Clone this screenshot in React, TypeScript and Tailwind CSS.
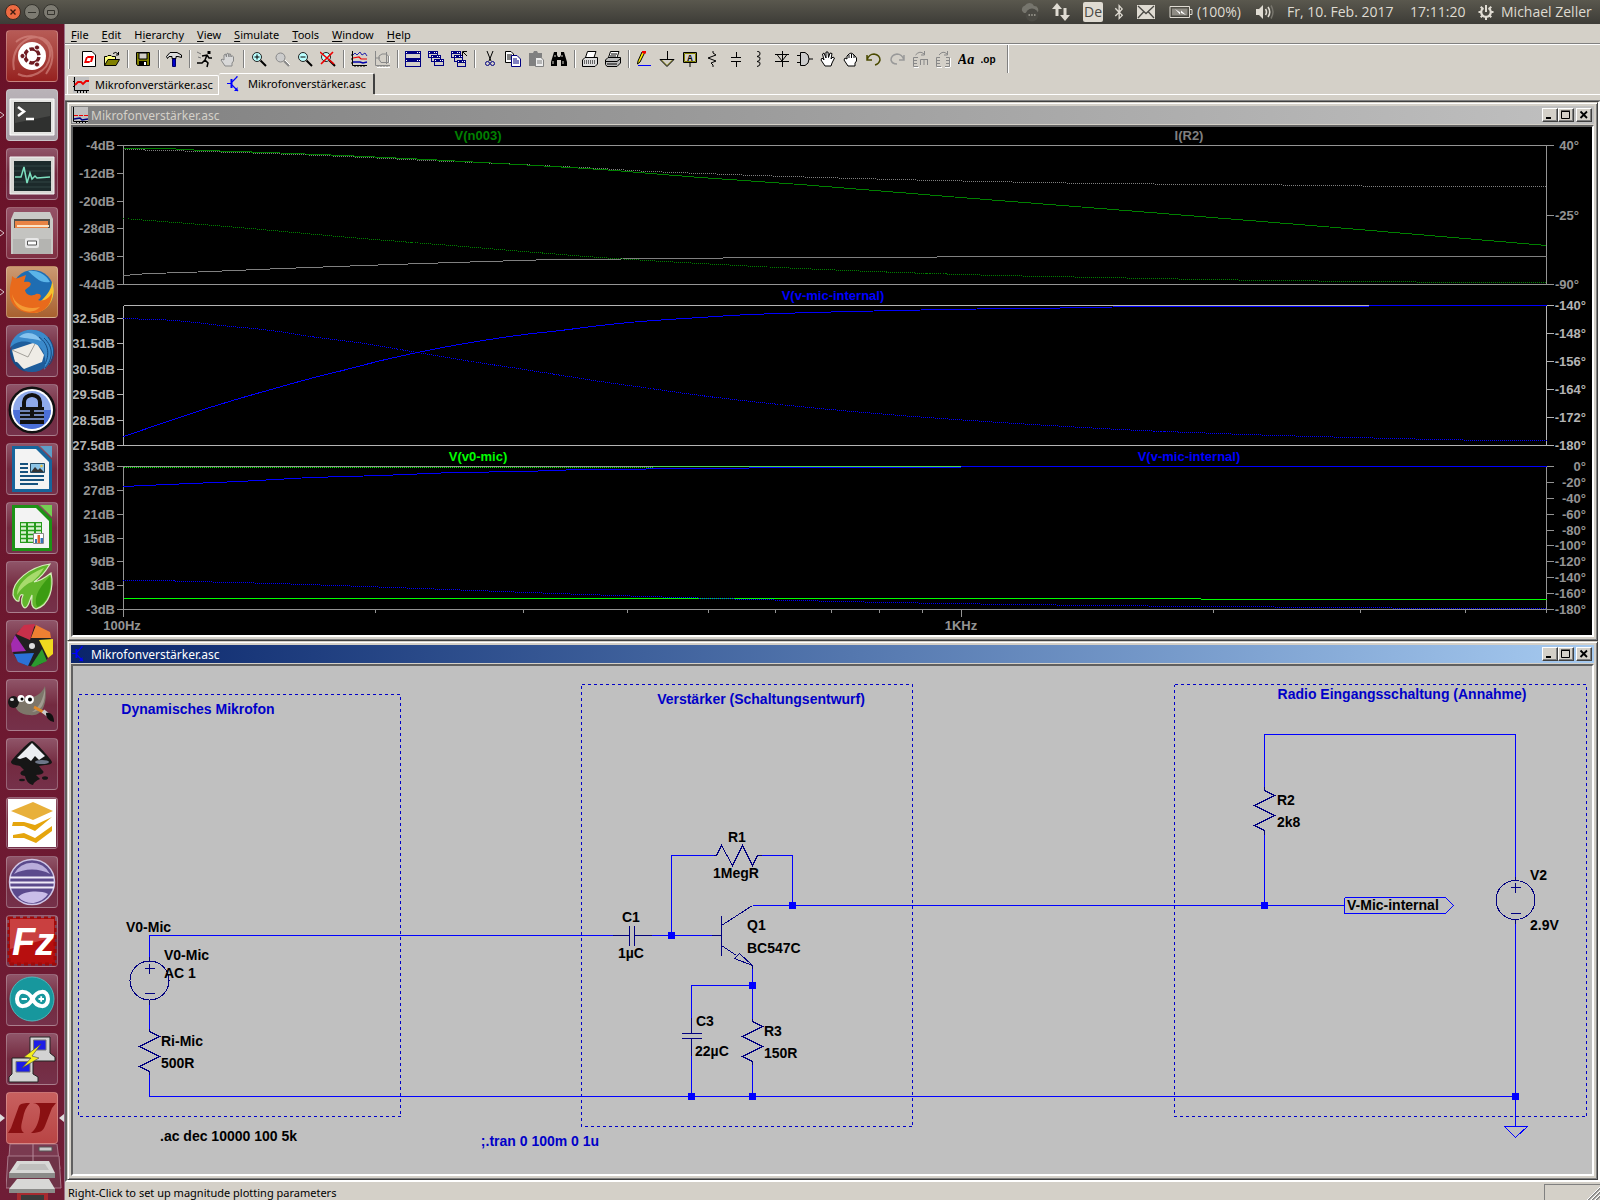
import type { ReactNode } from "react";
import { FaBluetoothB } from "react-icons/fa";

type Point = [number, number];

const path = (points: Point[]) =>
  points.map(([x, y], i) => `${i ? "L" : "M"}${x + 0.5} ${y + 0.5}`).join("");

// Catmull-Rom spline through the sampled points
const spline = (points: Point[]) => {
  let d = path(points.slice(0, 1));
  for (let i = 0; i < points.length - 1; i++) {
    const p0 = points[Math.max(i - 1, 0)];
    const [p1, p2] = [points[i], points[i + 1]];
    const p3 = points[Math.min(i + 2, points.length - 1)];
    const third = (p2[0] - p1[0]) / 3;
    const slope1 = (p2[1] - p0[1]) / (p2[0] - p0[0]);
    const slope2 = (p3[1] - p1[1]) / (p3[0] - p1[0]);
    d += `C${p1[0] + third + 0.5} ${p1[1] + slope1 * third + 0.5} ${p2[0] - third + 0.5} ${p2[1] - slope2 * third + 0.5} ${p2[0] + 0.5} ${p2[1] + 0.5}`;
  }
  return d;
};

/* ---------- top panel ---------- */

function WindowDots() {
  return (
    <div className="flex items-center gap-[3px]">
      <button
        aria-label="Close"
        className="flex h-4 w-4 items-center justify-center rounded-full border border-[#3a2a22] bg-[#ee6b42]"
      >
        <svg viewBox="0 0 8 8" className="h-2 w-2" stroke="#3c1a10" strokeWidth="1.4">
          <path d="M1.5 1.5L6.5 6.5M6.5 1.5L1.5 6.5" />
        </svg>
      </button>
      <button
        aria-label="Minimize"
        className="flex h-4 w-4 items-center justify-center rounded-full border border-[#35342e] bg-[#7d7b72]"
      >
        <svg viewBox="0 0 8 8" className="h-2 w-2" stroke="#35342e">
          <path d="M0 4.5H8" />
        </svg>
      </button>
      <button
        aria-label="Maximize"
        className="flex h-4 w-4 items-center justify-center rounded-full border border-[#35342e] bg-[#7d7b72]"
      >
        <svg viewBox="0 0 8 8" className="h-2 w-2" fill="none" stroke="#35342e">
          <path d="M0.5 2.5H7.5V6.5H0.5z" />
        </svg>
      </button>
    </div>
  );
}

function TopPanel() {
  return (
    <header className="flex h-6 items-center justify-between bg-linear-to-b from-[#5a584e] to-[#3d3c37] pr-[6px] pl-[5px] font-['Open_Sans','Noto_Sans',sans-serif] text-[14px] leading-6 text-[#dfdbd2]">
      <WindowDots />
      <div className="flex items-center">
        <svg viewBox="0 0 20 20" className="mr-3 h-5 w-5">
          <path d="M4 11a4 4 0 0 1 1-7.5A5 5 0 0 1 14 4a4 4 0 0 1 3 7z" fill="#76756d" />
          <circle cx="12" cy="13" r="6.5" fill="#4b4a44" />
          <path d="M8.500 13h1.500M11.200 13h1.500M14 13h1.500" stroke="#8f8d84" strokeWidth="2" />
        </svg>
        <svg viewBox="0 0 18 18" className="mr-[13px] h-[18px] w-[18px]" fill="#dfdbd2">
          <path d="M0 6L5 0L10 6H6.500V13H3.500V6zM8 12H11.500V5H14.500V12H18L13 18z" />
        </svg>
        <span className="mr-[11px] flex h-5 w-[20px] items-center justify-center rounded-xs bg-[#dfdbd2] text-[#4a4944]">
          De
        </span>
        <FaBluetoothB className="mr-[13px] h-4 w-[10px]" />
        <svg viewBox="0 0 18 14" className="mr-[14px] h-[14px] w-[18px]">
          <path d="M0 0H18V14H0z" fill="#dfdbd2" />
          <path d="M1 1L9 8.500L17 1M1 13L6.500 7M17 13L11.500 7" fill="none" stroke="#4a4944" strokeWidth="1.300" />
        </svg>
        <svg viewBox="0 0 24 12" className="mr-1 h-3 w-6">
          <path d="M1 .5H20.500V11.500H1zM21 3.500h2v5h-2" fill="none" stroke="#dfdbd2" />
          <path d="M3 2.500H18.500V9.500H3z" fill="#8f8c84" />
          <path d="M6 3L12 7V4.500L17 9L11 6.500V8.500z" fill="#fff" />
        </svg>
        <span className="mr-3 w-[46px] whitespace-nowrap">(100%)</span>
        <svg viewBox="0 0 20 16" className="mr-3 h-4 w-5">
          <path d="M1 5H4L8 1V15L4 11H1z" fill="#dfdbd2" />
          <path d="M10.500 5Q12.500 8 10.500 11M13 3Q16.500 8 13 13" fill="none" stroke="#dfdbd2" strokeWidth="1.600" />
          <path d="M16 1.500Q20 8 16 14.500" fill="none" stroke="#77756d" strokeWidth="1.500" />
        </svg>
        <span className="mr-4 w-[107px] whitespace-nowrap">Fr, 10. Feb. 2017</span>
        <span className="mr-3 w-[56px] whitespace-nowrap">17:11:20</span>
        <svg viewBox="0 0 16 16" className="mr-[7px] h-4 w-4" fill="none" stroke="#dfdbd2">
          <path d="M5.500 4A4.800 4.800 0 1 0 10.500 4" strokeWidth="2.200" />
          <path
            d="M8 1V8M.5 8H3M13 8h2.500M2.700 13.300L4.500 11.500M13.300 13.300L11.500 11.500M2.700 2.700L4.300 4.300M13.300 2.700L11.700 4.300M8 13v3"
            strokeWidth="2"
          />
        </svg>
        <span className="w-[93px] whitespace-nowrap">Michael Zeller</span>
      </div>
    </header>
  );
}

/* ---------- launcher ---------- */

interface LauncherItem {
  name: string;
  tile: string;
  running?: boolean;
  active?: boolean;
  art: ReactNode;
}

const plain = "bg-linear-to-b from-[#8f5468] via-[#732a40] to-[#75314a]";

const launcherItems: LauncherItem[] = [
  {
    name: "Dash",
    tile: "bg-linear-to-b from-[#b75b56] to-[#96201f]",
    art: (
      <>
        <path d="M8 40C4 18 20 4 36 8C48 12 50 30 40 44M10 12C24 0 46 8 44 26C42 42 24 50 12 44" fill="none" stroke="#d98f88" strokeWidth="2" opacity=".6" />
        <circle cx="26" cy="26" r="14" fill="#fff" />
        <circle cx="26" cy="26" r="7" fill="none" stroke="#6e1b22" strokeWidth="3.500" strokeDasharray="12.600 2.060" strokeDashoffset="-1" />
        <circle cx="16.500" cy="26" r="2.600" fill="#6e1b22" stroke="#fff" />
        <circle cx="31" cy="17.500" r="2.600" fill="#6e1b22" stroke="#fff" />
        <circle cx="31" cy="34.500" r="2.600" fill="#6e1b22" stroke="#fff" />
      </>
    ),
  },
  {
    name: "Terminal",
    tile: "bg-linear-to-b from-[#b9b3b8] to-[#a59ba3]",
    running: true,
    art: (
      <>
        <path d="M4 10H48V46H4z" fill="#e4e4e2" stroke="#fff" />
        <path d="M8 13H45V43H8z" fill="#2f302f" />
        <path d="M9 14H44V27L9 34z" fill="#454644" />
        <path d="M12 18L18 22.500L12 27M20 30H28" fill="none" stroke="#fff" strokeWidth="2.500" />
      </>
    ),
  },
  {
    name: "System Monitor",
    tile: plain,
    art: (
      <>
        <path d="M4 9H48V46H4z" fill="#d8d8d4" stroke="#f4f4f4" />
        <path d="M8 13H45V43H8z" fill="#1c2a2b" />
        <path d="M8 18H45M8 23H45M8 34H45M8 39H45" stroke="#314445" />
        <path d="M9 29H15L18 19L21 35L24 25L26 31L29 28L31 30L44 29" fill="none" stroke="#7de0c0" strokeWidth="1.500" />
      </>
    ),
  },
  {
    name: "Files",
    tile: "bg-linear-to-b from-[#945166] to-[#7f2f42]",
    running: true,
    art: (
      <>
        <path d="M8 5H44L47 12V47H5V12z" fill="#c9c9c6" />
        <path d="M8 12H44V24H8z" fill="#55504a" />
        <path d="M9 14H42V22H9z" fill="#e98344" />
        <path d="M11 18H43V20H11z" fill="#fbe3c7" />
        <path d="M7 21H45V47H7z" fill="#b4b4b1" />
        <path d="M7 21H45V32H7z" fill="#c4c4c1" />
        <rect x="19" y="31" width="14" height="10" rx="2" fill="#e8e8e8" />
        <path d="M21.500 34H30.500V38H21.500z" fill="#fff" stroke="#555" />
      </>
    ),
  },
  {
    name: "Firefox",
    tile: "bg-linear-to-b from-[#cc9a72] to-[#a8612f]",
    running: true,
    art: (
      <>
        <circle cx="27" cy="25" r="21" fill="#1f6db2" />
        <path d="M22 5A21 21 0 0 1 44 16C34 18 28 10 22 5z" fill="#5bb4e8" />
        <path d="M46 15C52 30 43 46 28 47C16 47 30 40 36 34C42 28 46 22 46 15z" fill="#f8c32c" />
        <path d="M6 10C8 12 10 13 12 12L20 9L18 16C24 15 26 17 24 20L19 24C20 29 25 31 30 28C35 27 37 31 32 34C38 36 43 32 46 27C46 42 34 48 25 47C10 46 2 36 4 24C4 18 6 16 6 10z" fill="#e86a1c" />
        <path d="M6 28C9 40 22 44 34 41C26 50 8 46 6 28z" fill="#f49b35" />
      </>
    ),
  },
  {
    name: "Thunderbird",
    tile: plain,
    art: (
      <>
        <circle cx="26" cy="26" r="21" fill="#1e5d9c" />
        <path d="M6 25L30 17L38 30L36 37L18 44L9 37z" fill="#efece6" />
        <path d="M6 25L22 32L30 17" fill="none" stroke="#a3a09a" />
        <path d="M4 23C6 8 22 1 35 7C49 14 52 31 38 45C42 30 36 20 26 18C16 15 9 17 4 23z" fill="#3b8acb" />
        <path d="M13 12C20 5 31 8 35 16C28 13 20 14 13 12z" fill="#86c3ee" />
        <path d="M38 13C48 22 47 34 39 43M33 12C44 20 43 31 39 39M42 12C51 24 48 34 43 40" fill="none" stroke="#15497f" />
        <path d="M4 23C3 35 10 44 20 47C14 41 12 36 9 37z" fill="#174c86" />
      </>
    ),
  },
  {
    name: "KeePass",
    tile: plain,
    art: (
      <>
        <circle cx="26" cy="26" r="23.500" fill="#111" />
        <circle cx="26" cy="26" r="21" fill="#fff" />
        <circle cx="26" cy="26" r="19" fill="#8ea9ea" />
        <path d="M7 26A19 19 0 0 0 45 26z" fill="#4b6fd8" />
        <path d="M18 24V18A8 7 0 0 1 34 18V24" fill="none" stroke="#111" strokeWidth="4" />
        <path d="M14 23H38V40H14z" fill="#111" />
        <path d="M14 27H24M28 27H38M14 31H24M28 31H38M14 35H38" stroke="#8ea9ea" strokeWidth="1.500" />
      </>
    ),
  },
  {
    name: "Writer",
    tile: plain,
    art: (
      <>
        <path d="M6 3H32L46 17V49H6z" fill="#17659c" />
        <path d="M34 3H46V15z" fill="#5d9fc9" />
        <path d="M9 6H30L43 19V46H9z" fill="#f3f3f3" />
        <path d="M14 21H22M14 25H22M14 29H22M14 33H38M14 37H38M14 41H32" stroke="#17527e" strokeWidth="2" />
        <path d="M24.500 20.500H38.500V29.500H24.500z" fill="#8cc4e6" stroke="#234a64" />
        <path d="M25 29L29 24L32 27L34 25L38 29z" fill="#333" />
        <circle cx="35.500" cy="23" r="1.200" fill="#f3c63a" />
      </>
    ),
  },
  {
    name: "Calc",
    tile: plain,
    art: (
      <>
        <path d="M6 3H32L46 17V49H6z" fill="#1d9216" />
        <path d="M34 3H46V15z" fill="#74cf52" />
        <path d="M9 6H30L43 19V46H9z" fill="#f3f3f3" />
        <path d="M14 20H36V41H14z" fill="#259a1b" />
        <path d="M15 22.500H20M22 22.500H28M30 22.500H35M15 26.500H20M22 26.500H28M30 26.500H35M15 30.500H20M22 30.500H28M30 30.500H35M15 34.500H20M22 34.500H28M15 38.500H20M22 38.500H28" stroke="#d8f2d0" strokeWidth="2.500" />
        <path d="M27.500 31.500H37.500V41.500H27.500z" fill="#fff" stroke="#888" />
        <path d="M29 37H31V41H29z" fill="#3672b5" />
        <path d="M31.500 33H34V41H31.500z" fill="#e0642a" />
        <path d="M34.500 36H37V41H34.500z" fill="#3672b5" />
      </>
    ),
  },
  {
    name: "Midori",
    tile: plain,
    art: (
      <>
        <path
          d="M44 3C24 6 6 20 7 34C8 38 11 41 13 40C13 35 15 33 17 34C14 40 16 46 19 47C23 46 23 40 26 34C26 40 24 46 30 48C44 44 48 26 45 12C40 16 34 20 28 21C34 17 40 10 44 3z"
          fill="#62b62c"
          stroke="#d5eebb"
          strokeWidth="1.200"
        />
        <path d="M44 15C46 28 42 42 31 46C28 38 30 30 44 15z" fill="#3c9c12" />
        <path d="M38 7C20 14 11 24 11 34C16 26 22 22 26 21C31 17 35 12 38 7z" fill="#a7db6c" />
      </>
    ),
  },
  {
    name: "Darktable",
    tile: plain,
    art: (
      <>
        <circle cx="26" cy="26" r="20" fill="#202020" />
        <path d="M10 14L18 5L29 4L24 20z" fill="#c9304a" />
        <path d="M30 5L44 12L45 18L25 18z" fill="#ee8032" />
        <path d="M33 20L47 19L47 34L42 38z" fill="#f0da1f" />
        <path d="M36 29L41 41L28 47L25 46z" fill="#2c9a2e" />
        <path d="M28 33L22 46L12 42L8 34z" fill="#2b72d6" />
        <path d="M9 15L20 31L6 32L5 24z" fill="#a32bb0" />
        <circle cx="26" cy="26" r="3" fill="#ddd" />
      </>
    ),
  },
  {
    name: "GIMP",
    tile: plain,
    art: (
      <>
        <path d="M39 7C42 25 36 38 24 36C14 36 8 30 9 23C12 18 16 20 20 18C27 20 35 16 39 7z" fill="#7d766a" />
        <path d="M39 9C40 24 35 33 26 33C34 28 37 20 39 9z" fill="#a19b90" />
        <ellipse cx="7.500" cy="23" rx="5.500" ry="6" fill="#181818" />
        <ellipse cx="6" cy="20.500" rx="2" ry="1.500" fill="#ddd" />
        <circle cx="15" cy="19.500" r="3.500" fill="#fff" />
        <circle cx="23.500" cy="20.500" r="4.500" fill="#fff" />
        <circle cx="16" cy="20" r="1.500" />
        <circle cx="24" cy="20.500" r="2" />
        <path d="M28 28L39 34" stroke="#e08a2a" strokeWidth="3" />
        <path d="M37 32L42 36" stroke="#ccc" strokeWidth="4" />
        <path d="M40 34C46 33 48 38 48 43C43 42 40 39 40 34z" fill="#111" />
      </>
    ),
  },
  {
    name: "Inkscape",
    tile: plain,
    art: (
      <>
        <path d="M26 3C29 3 46 22 46 24C46 26 43 27 39 27L33 28L36 32C40 35 35 37 30 37L34 41C30 43 28 44 27 47C22 46 20 42 19 38C13 37 13 34 18 32L14 28C8 27 5 26 5 24C5 22 23 3 26 3z" fill="#161616" />
        <path d="M26 5L39 18L33 22L29 18L25 23L20 19L14 21L11 20z" fill="#eceef2" />
        <ellipse cx="16" cy="42" rx="3" ry="1.300" fill="#161616" />
        <ellipse cx="39" cy="40" rx="3" ry="1.800" fill="#161616" />
        <ellipse cx="36" cy="24" rx="7" ry="2" fill="#6d7688" />
      </>
    ),
  },
  {
    name: "Layers",
    tile: plain,
    art: (
      <>
        <path d="M2 2H50V50H2z" fill="#fff" />
        <path d="M5 14L27 5L47 14L27 23z" fill="#e8b03a" />
        <path d="M7 25H18L29 28L46 20L29 34L18 29L6 29z" fill="#e5a50d" />
        <path d="M7 38L18 36L29 41L46 29V34L30 46L18 41L7 41z" fill="#e5a50d" />
      </>
    ),
  },
  {
    name: "Eclipse",
    tile: plain,
    art: (
      <>
        <circle cx="26" cy="26" r="22.500" fill="#5b4a8c" stroke="#cfc6e6" strokeWidth="1.500" />
        <path d="M8 18A20 20 0 0 1 44 18C34 12 18 12 8 18z" fill="#b9addb" />
        <path d="M12 41A19 19 0 0 0 42 38C34 34 18 35 12 41z" fill="#c9bde8" />
        <path d="M4 21.500H48M4 26.500H48M4 31.500H48" stroke="#efeaf8" strokeWidth="1.800" />
      </>
    ),
  },
  {
    name: "FileZilla",
    tile: plain,
    art: (
      <>
        <path d="M3 3H49V49H3z" fill="#b70f0f" stroke="#9f0b0b" strokeWidth="3" strokeDasharray="4 3" />
        <path d="M4 4H48V22L4 34z" fill="#c94040" />
        <text x="6" y="40" fill="#fff" fontFamily="Liberation Sans, sans-serif" fontStyle="italic" fontWeight="700" fontSize="38">
          Fz
        </text>
      </>
    ),
  },
  {
    name: "Arduino",
    tile: plain,
    art: (
      <>
        <circle cx="26" cy="25" r="22" fill="#17979d" stroke="#4db7ba" />
        <path d="M26.500 25C22 16 11 15 11 25S22 34 26.500 25C31 16 42 15 42 25S31 34 26.500 25z" fill="none" stroke="#fff" strokeWidth="4" />
        <path d="M15.500 25H21M32.500 25H38M35.200 22.200V27.800" stroke="#fff" strokeWidth="1.800" />
      </>
    ),
  },
  {
    name: "PuTTY",
    tile: plain,
    art: (
      <>
        <path d="M24 4H44V20L49 24V28H27L24 22z" fill="#d3d3d3" stroke="#222" />
        <path d="M27.500 7H40V17H27.500z" fill="#1c1ce6" stroke="#777" />
        <path d="M6 25H27V41L32 44V49H3V44L6 41z" fill="#d3d3d3" stroke="#222" />
        <path d="M10 28.500H24V39H10z" fill="#1c1ce6" stroke="#777" />
        <path d="M35 11L18 24L25 25L16 35L33 25L26 23z" fill="#f5ee1c" stroke="#444" strokeWidth=".6" />
      </>
    ),
  },
  {
    name: "LTspice",
    tile: "bg-linear-to-b from-[#c8605f] to-[#b84444]",
    active: true,
    art: (
      <>
        <path d="M24 11C19 11 15 11 13 14L5 36L2 41H18C14 38 15 33 17 26C18 20 20 15 24 11z" fill="#8a1012" />
        <path d="M27 11H50L46 16L39 34C37 39 34 41 25 41C29 38 31 34 33 27C35 18 35 12 27 11z" fill="#8a1012" />
      </>
    ),
  },
];

function Launcher() {
  return (
    <aside className="flex w-[65px] shrink-0 flex-col items-start gap-[7px] border-r border-[#9a7088] bg-linear-to-b from-[#6a1228] to-[#6f1d36] pt-[6px] pl-[6px]">
      {launcherItems.map((item) => (
        <div key={item.name} className="relative">
          <button aria-label={item.name} className={`block h-[52px] w-[52px] rounded-sm border border-white/25 ${item.tile}`}>
            <svg viewBox="1 1 50 50" className="h-[50px] w-[50px]">
              {item.art}
            </svg>
          </button>
          {item.running && (
            <svg viewBox="0 0 5 8" className="absolute top-[22px] -left-[6px] h-2 w-[5px]" fill="none" stroke="#d8c4cb">
              <path d="M0 1L4 4L0 7" />
            </svg>
          )}
          {item.active && (
            <>
              <svg viewBox="0 0 5 8" className="absolute top-[22px] -left-[6px] h-2 w-[5px]" fill="#ddd">
                <path d="M0 0L5 4L0 8z" />
              </svg>
              <svg viewBox="0 0 5 8" className="absolute top-[22px] -right-[6px] h-2 w-[5px]" fill="#ddd">
                <path d="M5 0L0 4L5 8z" />
              </svg>
            </>
          )}
        </div>
      ))}
      <svg viewBox="0 0 56 56" className="-mt-[7px] h-14 w-14 shrink-0">
        <path d="M4 0H51L54 25H2z" fill="#7a3a50" stroke="#a9788a" />
        <path d="M2 12H53L55 44H0z" fill="#6f3347" stroke="#a9788a" />
        <path d="M33 3H46V7H33z" fill="#c9c9c9" stroke="#555" />
        <path d="M27 0V22" stroke="#b58a99" />
        <path d="M11 17H43L49 29V33H3V29z" fill="#d8d8d6" />
        <path d="M3 29H49V34H3z" fill="#8b8b89" />
        <path d="M14 20H39L43 26H10z" fill="#bfbfbd" />
        <path d="M11 35H43L49 45V49H3V45z" fill="#d8d8d6" />
        <path d="M3 45H49V49H3z" fill="#8b8b89" />
        <path d="M11 49H42V56H11z" fill="#a72a2f" />
        <path d="M15 51H38V56H15z" fill="#3a3a3a" />
      </svg>
    </aside>
  );
}

/* ---------- LTspice menus and toolbar ---------- */

const menus = ["File", "Edit", "Hierarchy", "View", "Simulate", "Tools", "Window", "Help"];
const mnemonicAt: Record<string, number> = { Hierarchy: 1 };

function MenuBar() {
  return (
    <nav className="flex h-5 items-end gap-[13px] border-b border-[#808080] pl-[6px] text-[11px] leading-4">
      {menus.map((menu) => {
        const at = mnemonicAt[menu] ?? 0;
        return (
          <button key={menu} className="block">
            {menu.slice(0, at)}
            <span className="underline underline-offset-2">{menu[at]}</span>
            {menu.slice(at + 1)}
          </button>
        );
      })}
    </nav>
  );
}

const lens = (
  <>
    <circle cx="6" cy="6" r="4.500" fill="#bff" stroke="#222" />
    <path d="M9.500 9.500L15 15" stroke="#000" strokeWidth="2" />
  </>
);

const windowGlyph = (x: number, y: number, w: number, h: number) => (
  <g key={`${x}-${y}`}>
    <path d={`M${x} ${y}h${w}v${h}h-${w}z`} fill="#000080" />
    <path d={`M${x + 1} ${y + 3}h${w - 2}v${h - 4}h-${w - 2}z`} fill="#d4d0c8" />
    <path d={`M${x + w - 4} ${y + 1}h1v1h-1zM${x + w - 2} ${y + 1}h1v1h-1zM${x + 1} ${y + 1}h1v1h-1z`} fill="#fff" />
  </g>
);

const openHand = "M5 15L1 9L2 7L4 9L2.500 3L4 2L6 7L6 1H8L8.500 6.500L10 2L12 2.500L11 8L13 6L14.500 7L12 12L11 15z";
const flatHand = "M5 15L1 9L2 8L4 9V4L5.500 3L6.500 6V3L8 2L9 6V3L10.500 3L11 6L12 4.500L13.500 6V10L12 12V15z";

const toolGroups: [string, ReactNode][][] = [
  [
    [
      "New schematic",
      <>
        <path d="M1.500 .5H11L14.500 4V15.500H1.500z" fill="#fff" stroke="#000" />
        <path d="M6 5H13L11 11H9L10 7H7zM3 12L5 6H7L5.500 10H9L8.500 12z" fill="#e00" />
      </>,
    ],
    [
      "Open",
      <>
        <path d="M.5 14.500V5.500H3L4 4.500H7L8 5.500H11.500V8" fill="#ffff80" stroke="#000" />
        <path d="M.5 14.500L4 8.500H15.500L12 14.500z" fill="#808000" stroke="#000" />
        <path d="M9 2.500Q12 0 14 3M14.500 1V4H12" fill="none" stroke="#000" />
      </>,
    ],
  ],
  [
    [
      "Save",
      <>
        <path d="M1.500 1.500H14.500V14.500H2.500L1.500 13z" fill="#808000" stroke="#000" />
        <path d="M4 2H12V8H4z" fill="#d4d0c8" stroke="#000" />
        <path d="M4 10H12V14H4z" fill="#000" />
        <path d="M9 11H11V14H9z" fill="#fff" />
      </>,
    ],
  ],
  [
    [
      "Control panel",
      <>
        <path d="M.5 5.500L4 1.500H11L15.500 4V6.500L12 5.500H10V7.500H6V5.500H3L1.500 7.500z" fill="#ddd" stroke="#000" />
        <path d="M6.500 8H9.500V15.500H6.500z" fill="#00c" stroke="#006" />
      </>,
    ],
  ],
  [
    [
      "Run",
      <>
        <path d="M10.500 0H13.500V3H10.500z" fill="#000" />
        <path d="M5 5L10 4L12 7H15M10 4L8 9L11 12L10 16M8 9L5 12H0" fill="none" stroke="#000" strokeWidth="1.500" />
        <path d="M0 1L4 3M1 6L4 7" stroke="#777" />
      </>,
    ],
    ["Halt", <path d={flatHand} fill="#d8d8d8" stroke="#888" />],
  ],
  [
    [
      "Zoom in",
      <>
        {lens}
        <path d="M3.500 6H8.500M6 3.500V8.500" stroke="#000" />
      </>,
    ],
    [
      "Pan",
      <>
        <circle cx="6.500" cy="6.500" r="4.500" fill="#ccc" stroke="#888" />
        <path d="M10 10L15 15" stroke="#888" strokeWidth="2" />
        <path d="M11 9L16 14" stroke="#fff" />
      </>,
    ],
    [
      "Zoom out",
      <>
        {lens}
        <path d="M3.500 6H8.500" stroke="#000" />
      </>,
    ],
    [
      "Zoom full extents",
      <>
        {lens}
        <path d="M0 1L14 13M13 1L1 13" stroke="#e00" strokeWidth="1.600" />
      </>,
    ],
  ],
  [
    [
      "Autorange",
      <>
        <path d="M1.500 0V14.500H16M4 14V16M7 14V16M10 14V16M13 14V16M0 4H2M0 8H2M0 12H2" fill="none" stroke="#000" />
        <path d="M2 4L4 2L6 4L9 1L11 4L14 2L16 5" fill="none" stroke="#22a" />
        <path d="M2 7L8 6L10 8H16" fill="none" stroke="#e00" strokeWidth="1.200" />
        <path d="M2 11L9 11L12 12L16 11" fill="none" stroke="#00a" strokeWidth="1.500" />
      </>,
    ],
    [
      "Pick visible traces",
      <>
        <path d="M1.500 0V14.500H16M4 14V16M7 14V16M10 14V16M13 14V16" fill="none" stroke="#888" />
        <path d="M2 7H6M5 9V5L8 3H12L14.500 5V11.500H7L5.500 9zM12.500 1V13" fill="none" stroke="#888" />
        <path d="M3 16.500H16M15.500 5V12" stroke="#fff" />
      </>,
    ],
  ],
  [
    ["Tile", <>{windowGlyph(0, 0, 16, 8)}{windowGlyph(0, 8, 16, 8)}</>],
    ["Cascade", <>{windowGlyph(0, 0, 10, 7)}{windowGlyph(3, 4, 10, 7)}{windowGlyph(6, 8, 10, 7)}</>],
    [
      "Close all",
      <>
        {windowGlyph(0, 0, 10, 7)}
        {windowGlyph(3, 4, 9, 7)}
        {windowGlyph(6, 9, 9, 7)}
        <path d="M11.500 5V.5H16M12 1L16 5" fill="none" stroke="#000" />
      </>,
    ],
  ],
  [
    [
      "Cut",
      <>
        <path d="M5 0L9 10M11 0L7 10" fill="none" stroke="#000" />
        <circle cx="5.500" cy="12.500" r="2" fill="none" stroke="#000080" />
        <circle cx="10.500" cy="12.500" r="2" fill="none" stroke="#000080" />
      </>,
    ],
    [
      "Copy",
      <>
        <path d="M.5 .5H6L8.500 3V11.500H.5z" fill="#fff" stroke="#000" />
        <path d="M2 4H7M2 6H7M2 8H6" stroke="#000" />
        <path d="M6.500 4.500H12L15.500 8V15.500H6.500z" fill="#fff" stroke="#000080" />
        <path d="M8 8H12M8 10H14M8 12H14" stroke="#000080" />
      </>,
    ],
    [
      "Paste",
      <>
        <path d="M1 2H5L6 0H9L10 2H14V15H1z" fill="#808080" />
        <path d="M7.500 6.500H13L15.500 9V15.500H7.500z" fill="#eee" stroke="#808080" />
        <path d="M9 10H14M9 12H14" stroke="#808080" />
      </>,
    ],
    [
      "Find",
      <>
        <path d="M3 1H6V4L7 6H9L10 4V1H13L16 11V15H10V9H6V15H0V11z" fill="#000" />
        <path d="M2 10V13M4 4V6M12 10V13M11 4V6" stroke="#d4d0c8" />
      </>,
    ],
  ],
  [
    [
      "Print setup",
      <>
        <path d="M3.500 6.500L5.500 .5H14L12 6.500z" fill="#fff" stroke="#000" />
        <path d="M.5 9L3 6.500H15.500V13L13 15.500H.5z" fill="#ddd" stroke="#000" />
        <path d="M2 10H13M2 12H13" stroke="#666" strokeDasharray="1 1" strokeWidth="2" />
      </>,
    ],
    [
      "Print",
      <>
        <path d="M3.500 6.500L5.500 .5H14L12 6.500z" fill="#fff" stroke="#000" />
        <path d="M6 3H12M5 5H11" stroke="#000" />
        <path d="M.5 9L3 6.500H15.500V12L12 15.500H2L.5 13.500z" fill="#bbb" stroke="#000" />
        <path d="M1 10.500H12L15 8M2 13H12" fill="none" stroke="#000" />
      </>,
    ],
  ],
  [
    [
      "Draw wire",
      <>
        <path d="M6 1H9L4 11L1.500 13L2 10z" fill="#fe0" stroke="#000" />
        <path d="M6 0H10V2L9 3L6 2z" fill="#e00" />
        <path d="M2 14.500H15" stroke="#00f" />
      </>,
    ],
    [
      "Ground",
      <>
        <path d="M2 8.500H14L8 14.500z" fill="#d4d0c8" stroke="#808000" />
        <path d="M8.500 0V8M1 8.500H15L8 15.500z" fill="none" stroke="#000" />
      </>,
    ],
    [
      "Label net",
      <>
        <path d="M1.500 1.500H14.500V11.500H1.500z" fill="#d4d0c8" stroke="#000" />
        <path d="M2.500 2.500H13.500V10.500H2.500z" fill="none" stroke="#808000" />
        <path d="M8 12V16" stroke="#000" />
        <text x="8" y="9.500" textAnchor="middle" fontFamily="Liberation Mono, monospace" fontWeight="700" fontSize="9">
          A
        </text>
      </>,
    ],
    ["Resistor", <path d="M8 0V2L11 4L3 7L11 10L6 12L8 14V16" fill="none" stroke="#000" />],
    ["Capacitor", <path d="M8.500 1V6.500M3 6.500H13M3 10.500H13M8.500 10.500V16" fill="none" stroke="#000" />],
    ["Inductor", <path d="M6 0Q10 1 9 3Q9 5 6 5.500Q10 6 9 8Q9 10 6 10.500Q10 11 9 13Q9 15 6 15.500" fill="none" stroke="#000" />],
    ["Diode", <path d="M8.500 0V16M1 3.500H15M3 3.500L8 10L13 3.500M1 10.500H15" fill="none" stroke="#000" />],
    ["Component", <path d="M0 4.500H3M0 11.500H3M3.500 1.500H8Q12 3 12 8Q12 13 8 14.500H3.500zM12 8H16" fill="#ccc" stroke="#000" />],
    ["Move", <path d={openHand} fill="#fff" stroke="#000" />],
    ["Drag", <path d="M5 15L1 9L2 7L4 8V5L6 3L8 2L10 3L12 5L13.500 7V10L12 12V15z M6 4V7M8.500 3V7M11 4V7" fill="#fff" stroke="#000" />],
    ["Undo", <path d="M1 4V9H6M1 9Q3 3 8 3Q14 4 14 9Q13 13 9 14" fill="none" stroke="#4a4a00" strokeWidth="1.500" />],
    ["Redo", <path d="M15 4V9H10M15 9Q13 3 8 3Q2 4 2 9Q3 13 8 13" fill="none" stroke="#999" strokeWidth="1.500" />],
    [
      "Rotate",
      <>
        <path d="M3.500 4Q8 -1 12 3M12.500 0V4H9M6 6.500H1.500V15.500H6M2 9.500H5M2 12.500H5M8.500 14V8.500H16M12 9V14M15.500 9V14" fill="none" stroke="#888" />
        <path d="M2 16.500H7" stroke="#fff" />
      </>,
    ],
    [
      "Mirror",
      <>
        <path d="M4 4Q8 -1 12 3M12.500 0V4H9M5 6.500H1.500V15.500H6M2 9.500H5M2 12.500H5M11 6.500H14.500V15.500H10M14 9.500H11M14 12.500H11" fill="none" stroke="#888" />
        <path d="M2 16.500H7M10 16.500H15M15.500 7V16" stroke="#fff" />
      </>,
    ],
    [
      "Text",
      <text x="8" y="13" textAnchor="middle" fontFamily="Liberation Serif, serif" fontStyle="italic" fontWeight="700" fontSize="14">
        Aa
      </text>,
    ],
    [
      "SPICE directive",
      <text x="7" y="12" textAnchor="middle" fontFamily="Liberation Sans, sans-serif" fontWeight="700" fontSize="10">
        .op
      </text>,
    ],
  ],
];

function Toolbar() {
  return (
    <div className="flex h-[29px] border-t border-white pl-[3px]">
      <div className="mr-2 h-5 w-[2px] self-center border-r border-[#808080] bg-white" />
      {toolGroups.map((group, i) => (
        <div key={i} className="flex items-center">
          {i > 0 && (
            <div className="flex w-2 justify-center">
              <div className="h-[18px] w-[2px] border-l border-[#808080] bg-white" />
            </div>
          )}
          {group.map(([label, art]) => (
            <button key={label} title={label} className="flex h-6 w-[23px] items-center justify-center">
              <svg viewBox="0 0 17 17" className="h-[17px] w-[17px]">
                {art}
              </svg>
            </button>
          ))}
        </div>
      ))}
      <div className="ml-[6px] h-7 w-[2px] border-l border-[#808080] bg-white" />
    </div>
  );
}

function PlotIcon() {
  return (
    <svg viewBox="0 0 16 16" className="h-4 w-4 shrink-0">
      <path d="M0 0H16V16H0z" fill="#c0c0c0" />
      <path d="M1.500 0V13.500H16M4.500 14V16M7.500 14V16M10.500 14V16M13.500 14V16M0 4.500H1M0 9.500H1" fill="none" stroke="#000" />
      <path d="M2 8L5 5H8L10 7L13 4H16" fill="none" stroke="#e00" strokeWidth="1.800" />
    </svg>
  );
}

function WaveformIcon() {
  return (
    <svg viewBox="0 0 16 16" className="h-4 w-4 shrink-0">
      <path d="M0 0H16V16H0z" fill="#c0c0c0" />
      <path d="M1.500 0V14.500H16M4.500 14V16M7.500 14V16M10.500 14V16M13.500 14V16" fill="none" stroke="#000" />
      <path d="M2 8.500H16" stroke="#e00" strokeDasharray="4 1" />
      <path d="M2 12L8 11L10 13L16 12" fill="none" stroke="#000080" strokeWidth="1.500" />
    </svg>
  );
}

function TransistorIcon() {
  return (
    <svg viewBox="0 0 16 16" className="h-4 w-4 shrink-0" fill="none" stroke="#00f">
      <path d="M4.500 3V12" strokeWidth="2" />
      <path d="M0 7.500H4M5 6L10 1V-1M5 9L11 15" strokeWidth="1.200" />
      <path d="M10.500 11V15H7z" fill="#00f" stroke="none" />
    </svg>
  );
}

function DocumentTabs() {
  return (
    <div className="flex h-[28px] flex-col border-b border-[#808080]">
      <div className="flex h-[21px] items-end pl-[2px] text-[11px] leading-[18px]" role="tablist">
        <button
          role="tab"
          aria-selected="false"
          className="flex h-[19px] w-[152px] items-center gap-[6px] rounded-t-xs border-x border-t border-white pl-[5px] whitespace-nowrap"
        >
          <PlotIcon />
          Mikrofonverstärker.asc
        </button>
        <button
          role="tab"
          aria-selected="true"
          className="flex h-[21px] w-[156px] items-center gap-[5px] rounded-t-xs border-t border-r-2 border-t-white border-r-[#404040] pl-[8px] whitespace-nowrap"
        >
          <TransistorIcon />
          Mikrofonverstärker.asc
        </button>
      </div>
      <div className="flex h-px">
        <div className="w-[154px] bg-white" />
        <div className="w-[156px]" />
        <div className="flex-1 bg-white" />
      </div>
    </div>
  );
}

/* ---------- MDI windows ---------- */

function CaptionButton({ label, children }: { label: string; children: ReactNode }) {
  return (
    <button
      aria-label={label}
      className="h-[14px] w-4 border border-t-white border-r-[#404040] border-b-[#404040] border-l-white bg-[#d4d0c8] shadow-[inset_-1px_-1px_0_#808080]"
    >
      <svg viewBox="0 0 14 12" className="h-3 w-[14px]" fill="none" stroke="#000">
        {children}
      </svg>
    </button>
  );
}

interface ChildWindowProps {
  active?: boolean;
  icon: ReactNode;
  children: ReactNode;
}

function ChildWindow({ active, icon, children }: ChildWindowProps) {
  return (
    <section className="border border-t-[#d4d0c8] border-r-[#404040] border-b-[#404040] border-l-[#d4d0c8] bg-[#d4d0c8] p-[3px] shadow-[inset_1px_1px_0_#fff,inset_-1px_-1px_0_#808080]">
      <div
        className={
          active
            ? "flex h-[18px] items-center bg-linear-to-r from-[#0a246a] to-[#a6caf0] pr-[2px] pl-px text-white"
            : "flex h-[18px] items-center bg-linear-to-r from-[#808080] to-[#c0c0c0] pr-[2px] pl-px text-[#d4d0c8]"
        }
      >
        {icon}
        <h2 className="ml-[3px] h-[18px] flex-1 text-[12px] leading-5">Mikrofonverstärker.asc</h2>
        <div className="flex">
          <CaptionButton label="Minimize">
            <path d="M3 9H8" strokeWidth="2" />
          </CaptionButton>
          <CaptionButton label="Maximize">
            <path d="M2.500 2.500H10.500V9.500H2.500zM2 2H11" />
          </CaptionButton>
          <div className="w-[2px]" />
          <CaptionButton label="Close">
            <path d="M3.500 2.500L10 9M10 2.500L3.500 9" strokeWidth="1.800" />
          </CaptionButton>
        </div>
      </div>
      <div className="mt-px border-2 border-t-[#606060] border-r-white border-b-white border-l-[#606060]">{children}</div>
    </section>
  );
}

/* ---------- waveform viewer ---------- */

const LEFT = 123;
const RIGHT = 1546;
const DECADE = 837.5;
const freqX = (hz: number) => Math.round(LEFT + DECADE * Math.log10(hz / 100));

interface Pane {
  top: number;
  bottom: number;
  color: string;
  left: [string, number][];
  right: [string, number][];
  rightEdge: number;
}

const panes: Pane[] = [
  {
    top: 145,
    bottom: 284,
    color: "#949494",
    left: [["-4dB", 145], ["-12dB", 173], ["-20dB", 201], ["-28dB", 228], ["-36dB", 256], ["-44dB", 284]],
    right: [["40°", 145], ["-25°", 215], ["-90°", 284]],
    rightEdge: 1579,
  },
  {
    top: 305,
    bottom: 445,
    color: "#b4b4b4",
    left: [["32.5dB", 318], ["31.5dB", 343], ["30.5dB", 369], ["29.5dB", 394], ["28.5dB", 420], ["27.5dB", 445]],
    right: [["-140°", 305], ["-148°", 333], ["-156°", 361], ["-164°", 389], ["-172°", 417], ["-180°", 445]],
    rightEdge: 1586,
  },
  {
    top: 466,
    bottom: 609,
    color: "#949494",
    left: [["33dB", 466], ["27dB", 490], ["21dB", 514], ["15dB", 538], ["9dB", 561], ["3dB", 585], ["-3dB", 609]],
    right: [
      ["0°", 466], ["-20°", 482], ["-40°", 498], ["-60°", 514], ["-80°", 530],
      ["-100°", 545], ["-120°", 561], ["-140°", 577], ["-160°", 593], ["-180°", 609],
    ],
    rightEdge: 1586,
  },
];

interface Trace {
  color: string;
  dotted?: boolean;
  // flat stretches that step by a pixel are drawn with straight segments
  stepped?: boolean;
  points: Point[];
}

const traces: Trace[] = [
  // upper pane: V(n003) and I(R2)
  {
    color: "#808080",
    dotted: true,
    points: [[123, 149], [203, 151], [267, 153], [343, 156], [427, 160], [500, 163], [560, 166], [600, 168], [650, 171], [702, 173], [757, 175], [820, 177], [895, 179], [987, 181], [1100, 183], [1225, 184], [1330, 185], [1400, 186], [1546, 186]],
  },
  {
    color: "#808080",
    stepped: true,
    points: [[123, 275], [148, 273], [185, 272], [282, 268], [363, 265], [453, 262], [552, 259], [620, 259], [621, 258], [722, 258], [723, 257], [936, 257], [937, 256], [1546, 256]],
  },
  {
    color: "#008000",
    dotted: true,
    points: [[123, 218], [238, 227], [350, 237], [463, 246], [600, 257], [700, 263], [800, 268], [900, 272], [1000, 275], [1100, 277], [1205, 279], [1275, 280], [1365, 281], [1479, 282], [1546, 282]],
  },
  {
    color: "#008000",
    points: [[123, 148], [163, 148], [203, 150], [267, 152], [343, 155], [427, 159], [500, 163], [600, 169], [700, 177], [800, 184], [960, 197], [1100, 208], [1323, 226], [1546, 245]],
  },
  // middle pane
  {
    color: "#0000ff",
    dotted: true,
    points: [[123, 318], [174, 320], [221, 325], [271, 330], [310, 336], [364, 343], [417, 352], [471, 361], [524, 369], [600, 381], [650, 388], [700, 395], [760, 402], [830, 409], [900, 415], [1000, 422], [1120, 429], [1191, 432], [1278, 435], [1394, 438], [1495, 440], [1546, 440]],
  },
  {
    color: "#0000ff",
    points: [[123, 436], [167, 421], [203, 409], [239, 398], [274, 388], [310, 378], [346, 369], [381, 360], [417, 352], [453, 345], [489, 339], [524, 334], [560, 330], [600, 325], [640, 321], [700, 317], [750, 314], [850, 311], [944, 309], [1010, 308], [1112, 307]],
  },
  { color: "#0000ff", stepped: true, points: [[1112, 306], [1368, 306], [1369, 305], [1546, 305]] },
  // lower pane
  { color: "#00ff00", dotted: true, stepped: true, points: [[123, 467], [652, 467]] },
  { color: "#4dd44d", stepped: true, points: [[652, 466], [960, 466]] },
  {
    color: "#0000ff",
    stepped: true,
    points: [[123, 486], [167, 484], [239, 481], [310, 477], [381, 475], [453, 472], [524, 471], [580, 469], [645, 469], [646, 468], [748, 468], [749, 467], [960, 467], [961, 466], [1546, 466]],
  },
  { color: "#00ff00", stepped: true, points: [[123, 598], [1200, 598], [1201, 599], [1546, 599]] },
  {
    color: "#0000ff",
    dotted: true,
    points: [[123, 580], [155, 580], [190, 581], [234, 582], [272, 583], [305, 584], [364, 586], [420, 588], [474, 590], [528, 592], [585, 594], [646, 596], [715, 598], [795, 600], [890, 602], [1016, 604], [1200, 606], [1350, 607], [1440, 608], [1546, 608]],
  },
];

const minorTicks = [200, 300, 400, 500, 600, 700, 800, 900, 2000, 3000, 4000, 5000];

function WaveformViewer() {
  return (
    <svg viewBox="73 127 1519 508" className="block h-auto w-full bg-black" fontFamily="Liberation Sans, Arial, sans-serif" fontWeight="700" fontSize="13">
      {panes.map((pane) => (
        <g key={pane.top} fill={pane.color}>
          <g stroke={pane.color} fill="none" shapeRendering="crispEdges">
            <path d={path([[LEFT, pane.top], [RIGHT, pane.top]])} />
            <path d={path([[LEFT, pane.bottom], [RIGHT, pane.bottom]])} />
            <path d={path([[LEFT, pane.top], [LEFT, pane.bottom]])} />
            <path d={path([[RIGHT, pane.top], [RIGHT, pane.bottom]])} />
            {pane.left.map(([label, y]) => (
              <path key={label} d={path([[LEFT - 7, y], [LEFT, y]])} />
            ))}
            {pane.right.map(([label, y]) => (
              <path key={label} d={path([[RIGHT, y], [RIGHT + 7, y]])} />
            ))}
          </g>
          {pane.left.map(([label, y]) => (
            <text key={label} x={115} y={y + 5} textAnchor="end">
              {label}
            </text>
          ))}
          {pane.right.map(([label, y]) => (
            <text key={label} x={pane.rightEdge} y={y + 5} textAnchor="end">
              {label}
            </text>
          ))}
        </g>
      ))}
      <g stroke="#949494" shapeRendering="crispEdges">
        {minorTicks.map((hz) => (
          <path key={hz} d={path([[freqX(hz), 609], [freqX(hz), 612]])} />
        ))}
        <path d={path([[LEFT, 609], [LEFT, 616]])} />
        <path d={path([[freqX(1000), 609], [freqX(1000), 616]])} />
      </g>
      <g fill="none" shapeRendering="crispEdges">
        {traces.map((trace, i) => (
          <path
            key={i}
            d={trace.stepped ? path(trace.points) : spline(trace.points)}
            stroke={trace.color}
            strokeDasharray={trace.dotted ? "1 1" : undefined}
          />
        ))}
      </g>
      <g textAnchor="middle">
        <text x="478" y="140" fill="#008000">V(n003)</text>
        <text x="1189" y="140" fill="#808080">I(R2)</text>
        <text x="833" y="300" fill="#0000ff">V(v-mic-internal)</text>
        <text x="478" y="461" fill="#00ff00">V(v0-mic)</text>
        <text x="1189" y="461" fill="#0000ff">V(v-mic-internal)</text>
        <text x="122" y="630" fill="#949494">100Hz</text>
        <text x="961" y="630" fill="#949494">1KHz</text>
      </g>
    </svg>
  );
}

/* ---------- schematic editor ---------- */

const wires: Point[][] = [
  [[149, 956], [149, 935], [612, 935]],
  [[149, 1004], [149, 1028]],
  [[149, 1073], [149, 1096], [1515, 1096]],
  [[651, 935], [711, 935]],
  [[671, 935], [671, 855], [713, 855]],
  [[761, 855], [792, 855], [792, 905]],
  [[752, 905], [1344, 905]],
  [[752, 968], [752, 1018]],
  [[752, 985], [691, 985], [691, 1017]],
  [[691, 1055], [691, 1096]],
  [[752, 1064], [752, 1096]],
  [[1264, 786], [1264, 734], [1515, 734], [1515, 876]],
  [[1264, 834], [1264, 905]],
  [[1515, 923], [1515, 1126]],
  [[1504, 1126], [1527, 1126], [1515, 1137], [1504, 1126]],
  [[1344, 897], [1445, 897], [1453, 905], [1445, 913], [1344, 913], [1344, 897]],
];

const symbols: Point[][] = [
  // V0-Mic source
  [[149, 956], [149, 960]],
  [[144, 968], [154, 968]],
  [[149, 963], [149, 973]],
  [[144, 993], [154, 993]],
  [[149, 1000], [149, 1004]],
  // Ri-Mic
  [[149, 1028], [149, 1031], [159, 1036], [139, 1046], [159, 1056], [139, 1066], [149, 1071], [149, 1074]],
  // C1
  [[612, 935], [629, 935]],
  [[629, 925], [629, 945]],
  [[634, 925], [634, 945]],
  [[634, 935], [651, 935]],
  // R1
  [[713, 855], [716, 855], [721, 845], [732, 865], [742, 845], [752, 865], [757, 855], [761, 855]],
  // Q1
  [[711, 935], [721, 935]],
  [[721, 915], [721, 955]],
  [[721, 925], [752, 905]],
  [[721, 945], [736, 955]],
  [[752, 965], [739, 953], [734, 958], [752, 965], [752, 968]],
  // C3
  [[691, 1017], [691, 1033]],
  [[681, 1033], [701, 1033]],
  [[681, 1038], [701, 1038]],
  [[691, 1038], [691, 1055]],
  // R3
  [[752, 1018], [752, 1021], [762, 1026], [742, 1036], [762, 1046], [742, 1056], [752, 1061], [752, 1064]],
  // R2
  [[1264, 786], [1264, 790], [1274, 795], [1254, 805], [1274, 815], [1254, 825], [1264, 830], [1264, 834]],
  // V2
  [[1515, 876], [1515, 880]],
  [[1510, 887], [1520, 887]],
  [[1515, 882], [1515, 892]],
  [[1510, 913], [1520, 913]],
  [[1515, 919], [1515, 923]],
];

const junctions: Point[] = [[671, 935], [792, 905], [752, 985], [691, 1096], [752, 1096], [1264, 905], [1515, 1096]];

const frames: [number, number, number, number][] = [
  [78, 694, 400, 1116],
  [581, 684, 912, 1126],
  [1174, 684, 1586, 1116],
];

const labels: [string, number, number][] = [
  ["V0-Mic", 126, 932],
  ["V0-Mic", 164, 960],
  ["AC 1", 164, 978],
  ["Ri-Mic", 161, 1046],
  ["500R", 161, 1068],
  ["C1", 622, 922],
  ["1µC", 618, 958],
  ["R1", 728, 842],
  ["1MegR", 713, 878],
  ["Q1", 747, 930],
  ["BC547C", 747, 953],
  ["C3", 696, 1026],
  ["22µC", 695, 1056],
  ["R3", 764, 1036],
  ["150R", 764, 1058],
  ["R2", 1277, 805],
  ["2k8", 1277, 827],
  ["V-Mic-internal", 1347, 910],
  ["V2", 1530, 880],
  ["2.9V", 1530, 930],
  [".ac dec 10000 100 5k", 160, 1141],
];

const comments: [string, number, number][] = [
  ["Dynamisches Mikrofon", 198, 714],
  ["Verstärker (Schaltungsentwurf)", 761, 704],
  ["Radio Eingangsschaltung (Annahme)", 1402, 699],
  [";.tran 0 100m 0 1u", 540, 1146],
];

function SchematicEditor() {
  return (
    <svg viewBox="73 666 1519 508" className="block h-auto w-full bg-[#c0c0c0]" fontFamily="Liberation Sans, Arial, sans-serif" fontWeight="700" fontSize="14">
      <g fill="none" stroke="#0000c8" strokeDasharray="3 3" shapeRendering="crispEdges">
        {frames.map(([x1, y1, x2, y2]) => (
          <path key={x1} d={path([[x1, y1], [x2, y1], [x2, y2], [x1, y2], [x1, y1]])} />
        ))}
      </g>
      <g fill="none" stroke="#0000ff" shapeRendering="crispEdges">
        {wires.map((points, i) => (
          <path key={i} d={path(points)} />
        ))}
      </g>
      <g fill="none" stroke="#000080" shapeRendering="crispEdges">
        {symbols.map((points, i) => (
          <path key={i} d={path(points)} />
        ))}
        <circle cx="149.500" cy="980.500" r="19.500" />
        <circle cx="1515.500" cy="900" r="19.500" />
      </g>
      <g fill="#0000ff">
        {junctions.map(([x, y]) => (
          <rect key={`${x}-${y}`} x={x - 3} y={y - 3} width="7" height="7" />
        ))}
      </g>
      {labels.map(([text, x, y]) => (
        <text key={`${text}-${x}`} x={x} y={y}>
          {text}
        </text>
      ))}
      <g fill="#0000c8" textAnchor="middle">
        {comments.map(([text, x, y]) => (
          <text key={text} x={x} y={y}>
            {text}
          </text>
        ))}
      </g>
    </svg>
  );
}

function StatusBar() {
  return (
    <footer className="flex h-[18px] items-end justify-between pl-[3px] text-[11px] leading-[14px]">
      <span>Right-Click to set up magnitude plotting parameters</span>
      <div className="flex h-4 w-14 items-end justify-end border-t border-l border-[#808080]">
        <svg viewBox="0 0 13 13" className="h-[13px] w-[13px]" stroke="#808080">
          <path d="M1 13L13 1M5 13L13 5M9 13L13 9" strokeWidth="1.600" />
          <path d="M0 13L13 0M4 13L13 4M8 13L13 8" stroke="#fff" />
        </svg>
      </div>
    </footer>
  );
}

export default function App() {
  return (
    <div className="flex min-h-screen flex-col bg-[#d4d0c8]">
      <TopPanel />
      <div className="flex flex-1">
        <Launcher />
        <main className="flex min-w-0 flex-1 flex-col font-['Noto_Sans','Open_Sans',sans-serif] text-black">
          <MenuBar />
          <Toolbar />
          <DocumentTabs />
          <div className="border-2 border-t border-t-[#404040] border-r-white border-b-white border-l-[#606060]">
            <ChildWindow icon={<WaveformIcon />}>
              <WaveformViewer />
            </ChildWindow>
            <ChildWindow active icon={<TransistorIcon />}>
              <SchematicEditor />
            </ChildWindow>
          </div>
          <StatusBar />
        </main>
      </div>
    </div>
  );
}
